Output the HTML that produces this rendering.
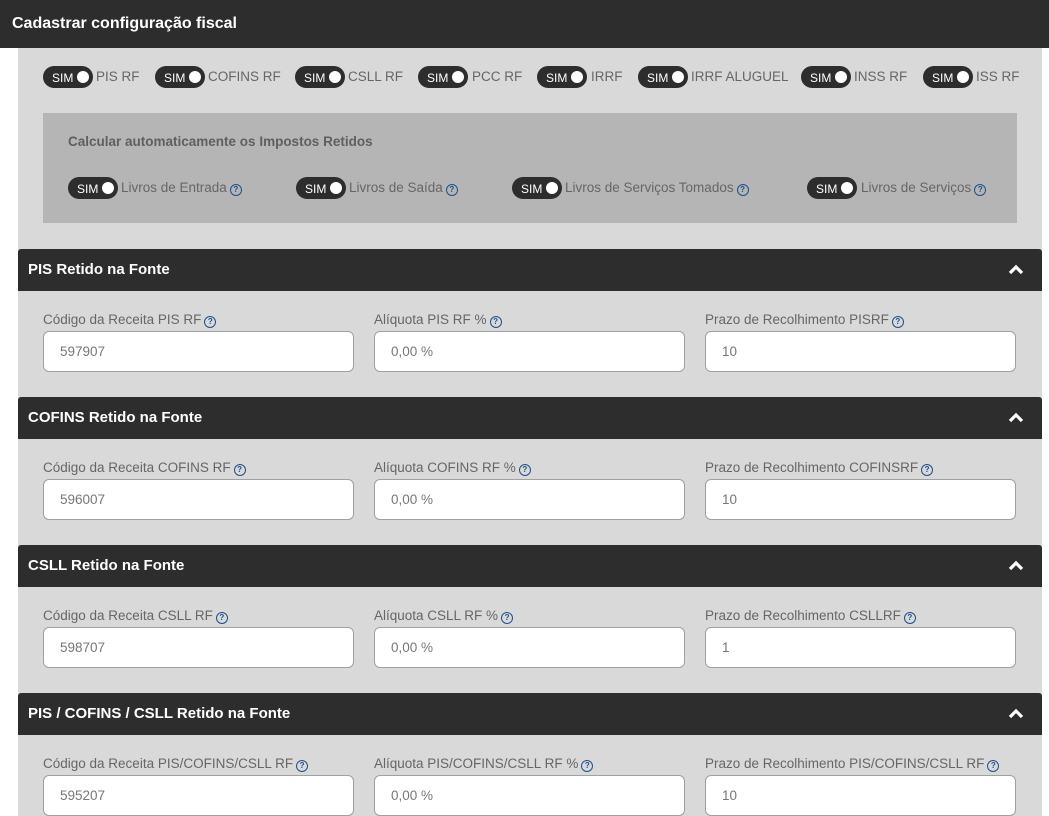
<!DOCTYPE html>
<html><head><meta charset="utf-8"><style>
*{box-sizing:border-box;margin:0;padding:0}
body{width:1049px;height:816px;overflow:hidden;background:#fff;font-family:"Liberation Sans",sans-serif;position:relative}
.top{position:absolute;left:0;top:0;width:1049px;height:48px;background:#2d2d2d;color:#fff;font-weight:bold;font-size:16px;padding:15px 0 0 12px}
.bg{position:absolute;left:18px;top:48px;width:1024px;height:768px;background:#d9d9d9}
.tg{position:absolute;height:22px;width:50px;border-radius:11px;background:#2d2d2d;color:#fff;font-size:12px;padding:5px 0 0 9px}
.tg::after{content:"";position:absolute;right:4px;top:5px;width:12px;height:12px;border-radius:50%;background:#fff}
.tl{position:absolute;font-size:13.5px;color:#666}
.box{position:absolute;left:43px;top:113px;width:974px;height:110px;background:#b5b5b5}
.q{display:inline-block;width:12px;height:12px;border:1.4px solid #1f4f8a;border-radius:50%;color:#1f4f8a;font-size:8px;font-weight:bold;text-align:center;line-height:10px;vertical-align:0px;margin-left:3px}
.sh{position:absolute;left:18px;width:1024px;height:42px;background:#2d2d2d;color:#fff;font-weight:bold;font-size:15px;padding:12px 0 0 10px;border-radius:3px 3px 0 0}
.sh svg{position:absolute;right:18px;top:15px}
.lb{position:absolute;font-size:13.5px;color:#666}
.in{position:absolute;width:311px;height:41px;background:#fff;border:1px solid #a0a0a0;border-radius:6px;font-size:13.5px;color:#777;padding:12px 0 0 16px}
</style></head><body>
<div class="top">Cadastrar configuração fiscal</div>
<div class="bg"></div>

<div class="tg" style="left:43px;top:66px">SIM</div><div class="tl" style="left:96px;top:69px">PIS RF</div>
<div class="tg" style="left:155px;top:66px">SIM</div><div class="tl" style="left:208px;top:69px">COFINS RF</div>
<div class="tg" style="left:295px;top:66px">SIM</div><div class="tl" style="left:348px;top:69px">CSLL RF</div>
<div class="tg" style="left:418px;top:66px">SIM</div><div class="tl" style="left:472px;top:69px">PCC RF</div>
<div class="tg" style="left:537px;top:66px">SIM</div><div class="tl" style="left:591px;top:69px">IRRF</div>
<div class="tg" style="left:638px;top:66px">SIM</div><div class="tl" style="left:691px;top:69px">IRRF ALUGUEL</div>
<div class="tg" style="left:801px;top:66px">SIM</div><div class="tl" style="left:854px;top:69px">INSS RF</div>
<div class="tg" style="left:923px;top:66px">SIM</div><div class="tl" style="left:976px;top:69px">ISS RF</div>

<div class="box"></div>
<div class="tl" style="left:68px;top:134px;font-weight:bold;font-size:13.5px;color:#5f5f5f">Calcular automaticamente os Impostos Retidos</div>
<div class="tg" style="left:68px;top:177px">SIM</div><div class="tl" style="left:121px;top:180px">Livros de Entrada<span class="q">?</span></div>
<div class="tg" style="left:296px;top:177px">SIM</div><div class="tl" style="left:349px;top:180px">Livros de Saída<span class="q">?</span></div>
<div class="tg" style="left:512px;top:177px">SIM</div><div class="tl" style="left:565px;top:180px">Livros de Serviços Tomados<span class="q">?</span></div>
<div class="tg" style="left:807px;top:177px">SIM</div><div class="tl" style="left:861px;top:180px">Livros de Serviços<span class="q">?</span></div>

<div class="sh" style="top:249px">PIS Retido na Fonte<svg width="16" height="11" viewBox="0 0 16 11"><path d="M2 9L8 3L14 9" stroke="#fff" stroke-width="3.2" fill="none"/></svg></div>
<div class="lb" style="left:43px;top:312px">Código da Receita PIS RF<span class="q">?</span></div>
<div class="lb" style="left:374px;top:312px">Alíquota PIS RF %<span class="q">?</span></div>
<div class="lb" style="left:705px;top:312px">Prazo de Recolhimento PISRF<span class="q">?</span></div>
<div class="in" style="left:43px;top:331px">597907</div>
<div class="in" style="left:374px;top:331px">0,00 %</div>
<div class="in" style="left:705px;top:331px">10</div>

<div class="sh" style="top:397px">COFINS Retido na Fonte<svg width="16" height="11" viewBox="0 0 16 11"><path d="M2 9L8 3L14 9" stroke="#fff" stroke-width="3.2" fill="none"/></svg></div>
<div class="lb" style="left:43px;top:460px">Código da Receita COFINS RF<span class="q">?</span></div>
<div class="lb" style="left:374px;top:460px">Alíquota COFINS RF %<span class="q">?</span></div>
<div class="lb" style="left:705px;top:460px">Prazo de Recolhimento COFINSRF<span class="q">?</span></div>
<div class="in" style="left:43px;top:479px">596007</div>
<div class="in" style="left:374px;top:479px">0,00 %</div>
<div class="in" style="left:705px;top:479px">10</div>

<div class="sh" style="top:545px">CSLL Retido na Fonte<svg width="16" height="11" viewBox="0 0 16 11"><path d="M2 9L8 3L14 9" stroke="#fff" stroke-width="3.2" fill="none"/></svg></div>
<div class="lb" style="left:43px;top:608px">Código da Receita CSLL RF<span class="q">?</span></div>
<div class="lb" style="left:374px;top:608px">Alíquota CSLL RF %<span class="q">?</span></div>
<div class="lb" style="left:705px;top:608px">Prazo de Recolhimento CSLLRF<span class="q">?</span></div>
<div class="in" style="left:43px;top:627px">598707</div>
<div class="in" style="left:374px;top:627px">0,00 %</div>
<div class="in" style="left:705px;top:627px">1</div>

<div class="sh" style="top:693px">PIS / COFINS / CSLL Retido na Fonte<svg width="16" height="11" viewBox="0 0 16 11"><path d="M2 9L8 3L14 9" stroke="#fff" stroke-width="3.2" fill="none"/></svg></div>
<div class="lb" style="left:43px;top:756px">Código da Receita PIS/COFINS/CSLL RF<span class="q">?</span></div>
<div class="lb" style="left:374px;top:756px">Alíquota PIS/COFINS/CSLL RF %<span class="q">?</span></div>
<div class="lb" style="left:705px;top:756px">Prazo de Recolhimento PIS/COFINS/CSLL RF<span class="q">?</span></div>
<div class="in" style="left:43px;top:775px">595207</div>
<div class="in" style="left:374px;top:775px">0,00 %</div>
<div class="in" style="left:705px;top:775px">10</div>
</body></html>
